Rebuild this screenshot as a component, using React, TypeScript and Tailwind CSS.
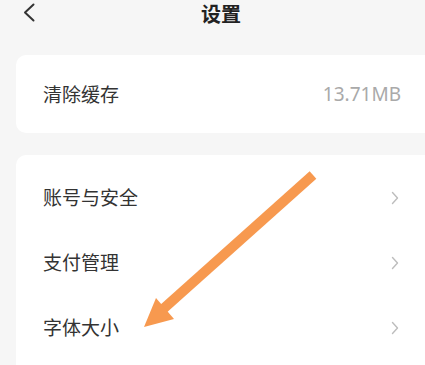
import React from "react";

const font = { fontFamily: '"Noto Sans CJK SC", "Noto Sans", sans-serif' };

function Chevron() {
  return (
    <svg width="8" height="14" viewBox="0 0 8 14" fill="none">
      <path d="M1.5 1.5 L6.5 7 L1.5 12.5" stroke="#bdbdbd" strokeWidth="1.4" strokeLinecap="round" strokeLinejoin="round" />
    </svg>
  );
}

const rows = ["账号与安全", "支付管理", "字体大小"];

export default function App() {
  return (
    <div className="relative w-[425px] h-[365px] overflow-hidden bg-[#f6f6f6]" style={font}>
      {/* Header */}
      <div className="relative h-[28px] flex items-center justify-center pl-[17px]">
        <svg className="absolute left-[22px] top-[3px]" width="14" height="19" viewBox="0 0 14 19" fill="none">
          <path d="M11.5 1.5 L3 9.5 L11.5 17.5" stroke="#333333" strokeWidth="2" strokeLinecap="round" strokeLinejoin="round" />
        </svg>
        <span className="text-[20px] font-bold text-[#222] leading-none">设置</span>
      </div>

      {/* Cache card */}
      <div className="ml-4 mt-[27px] w-[430px] h-[78px] bg-white rounded-[10px] flex items-center pl-[27px] pr-[45px]">
        <span className="text-[19px] text-[#333]">清除缓存</span>
        <span className="ml-auto text-[19px] text-[#a9a9a9]" style={{ fontFamily: '"Noto Sans", sans-serif' }}>13.71MB</span>
      </div>

      {/* Settings list */}
      <div className="ml-4 mt-[22px] w-[430px] bg-white rounded-[10px] pt-[10px] pb-4">
        {rows.map((r) => (
          <div key={r} className="h-[65px] flex items-center pl-[27px] pr-[47px]">
            <span className="text-[19px] text-[#333]">{r}</span>
            <span className="ml-auto flex">
              <Chevron />
            </span>
          </div>
        ))}
      </div>

      {/* Annotation arrow */}
      <svg className="absolute left-0 top-0 pointer-events-none" width="425" height="365" viewBox="0 0 425 365">
        <line x1="313" y1="175" x2="162" y2="310" stroke="#f7994f" strokeWidth="10" />
        <polygon points="144,327 156,298 174,319" fill="#f7994f" />
      </svg>
    </div>
  );
}
